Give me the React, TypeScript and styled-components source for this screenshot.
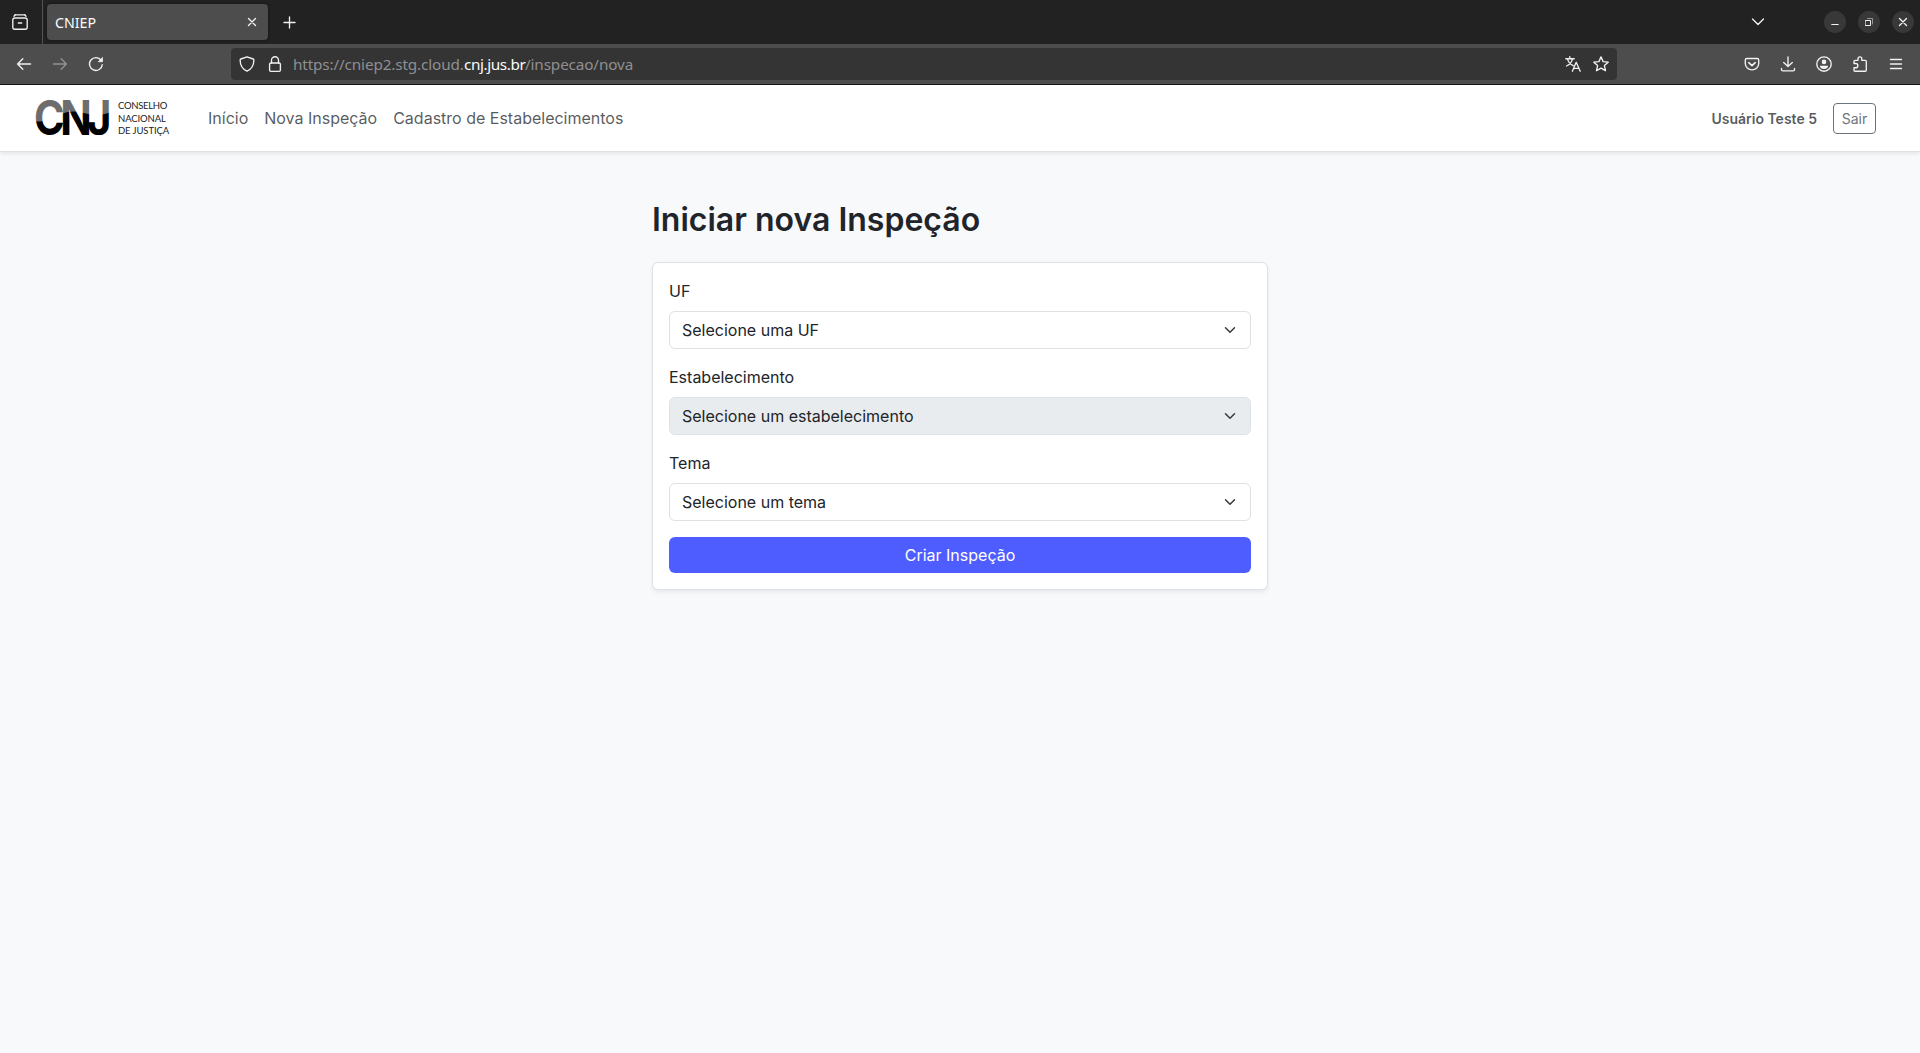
import React from "react";
import styled, { createGlobalStyle } from "styled-components";

const GlobalStyle = createGlobalStyle`
  *, *::before, *::after { box-sizing: border-box; }
  body {
    margin: 0;
    background: #f8f9fb;
    color: #212529;
    font-family: Inter, "Liberation Sans", sans-serif;
    font-size: 16px;
    line-height: 1.5;
  }
  button { font-family: inherit; margin: 0; }
`;

const Window = styled.div`
  display: flex;
  flex-direction: column;
  height: 1053px;
  overflow: hidden;
`;

/* ---------- browser chrome ---------- */

const TabStrip = styled.div`
  display: flex;
  align-items: center;
  flex: none;
  height: 44px;
  padding-right: 6px;
  background: #222222;
  font-family: "Noto Sans", "Open Sans", sans-serif;
`;

const RecentView = styled.div`
  display: flex;
  align-items: center;
  height: 44px;
  width: 43px;
  padding-left: 12px;
  border-right: 1px solid #535353;
`;

const Tab = styled.div`
  display: flex;
  align-items: center;
  justify-content: space-between;
  width: 221px;
  height: 36px;
  margin-left: 4px;
  padding: 2px 8px 0;
  border-radius: 4px;
  background: #4d4d4d;
  color: #fbfbfe;
  font-size: 14.2px;
  box-shadow: 0 0 3px rgba(0, 0, 0, 0.55);
`;

const NewTab = styled.div`
  display: flex;
  margin-left: 13px;
`;

const WindowControls = styled.div`
  display: flex;
  align-items: center;
  gap: 12px;
  margin-left: auto;
`;

const ListTabs = styled.div`
  display: flex;
  margin-right: 46px;
`;

const WindowButton = styled.div`
  display: flex;
  width: 22px;
  height: 22px;
  border-radius: 50%;
  background: #383838;
`;

const Toolbar = styled.div`
  display: flex;
  align-items: center;
  flex: none;
  height: 41px;
  padding: 0 16px 0 16px;
  border-bottom: 1px solid #141414;
  background: #4d4d4d;
`;

const ToolGroup = styled.div<{ $width?: number }>`
  display: flex;
  align-items: center;
  gap: 20px;
  width: ${(p) => (p.$width ? `${p.$width}px` : "auto")};
`;

const AddressBar = styled.div`
  display: flex;
  align-items: center;
  width: 1386px;
  height: 32px;
  padding: 0 8px;
  border-radius: 4px;
  background: #343434;
`;

const AddressIcons = styled.div`
  display: flex;
  gap: 12px;
`;

const Url = styled.div`
  flex: 1;
  margin-left: 10px;
  color: #8f8f92;
  font-family: "Noto Sans", "Open Sans", sans-serif;
  font-size: 15.3px;
  line-height: 30px;
  white-space: pre;
`;

const UrlPart = styled.span<{ $main?: boolean; $width: number }>`
  display: inline-flex;
  width: ${(p) => p.$width}px;
  color: ${(p) => (p.$main ? "#fbfbfe" : "inherit")};
  letter-spacing: ${(p) => (p.$main ? "-0.4px" : "-0.14px")};
`;

const RightTools = styled(ToolGroup)`
  margin-left: auto;
`;

const Glyph = styled.svg<{ $size?: number; $dim?: boolean }>`
  display: block;
  flex: none;
  width: ${(p) => p.$size ?? 16}px;
  height: ${(p) => p.$size ?? 16}px;
  fill: none;
  stroke: #fbfbfe;
  stroke-width: 1.35;
  stroke-linecap: round;
  stroke-linejoin: round;
  opacity: ${(p) => (p.$dim ? 0.4 : 0.95)};
`;

/* ---------- page ---------- */

const Navbar = styled.header`
  display: flex;
  align-items: center;
  position: relative;
  flex: none;
  height: 67px;
  padding: 0 44px 0 34px;
  border-bottom: 1px solid #dee2e6;
  background: #fff;
  box-shadow: 0 2px 4px rgba(0, 0, 0, 0.075);
`;

const Logo = styled.svg`
  display: block;
  flex: none;
  width: 136px;
  height: 64px;
`;

const NavLinks = styled.nav`
  display: flex;
  gap: 16px;
  margin-left: 38px;
`;

const NavLink = styled.a`
  color: rgba(33, 37, 41, 0.75);
  text-decoration: none;
`;

const Account = styled.div`
  display: flex;
  align-items: center;
  gap: 16px;
  margin-left: auto;
`;

const UserName = styled.span`
  color: rgba(33, 37, 41, 0.75);
  font-size: 14px;
  font-weight: 600;
`;

const LogoutButton = styled.button`
  width: 43px;
  height: 31px;
  padding: 4px 0;
  border: 1px solid #6c757d;
  border-radius: 4px;
  background: transparent;
  color: #6c757d;
  font-size: 14px;
  line-height: 21px;
`;

const Main = styled.main`
  width: 616px;
  margin: 49px auto 0;
`;

const Title = styled.h1`
  margin: 0 0 23px;
  font-size: 32px;
  font-weight: 600;
  line-height: 38px;
`;

const Card = styled.form`
  padding: 16px;
  border: 1px solid #dee2e6;
  border-radius: 6px;
  background: #fff;
  box-shadow: 0 2px 4px rgba(0, 0, 0, 0.075);
`;

const Field = styled.div`
  display: flex;
  flex-direction: column;
  gap: 8px;
  margin-bottom: 16px;
`;

const Label = styled.label`
  line-height: 24px;
`;

const Select = styled.div<{ $disabled?: boolean }>`
  display: flex;
  align-items: center;
  justify-content: space-between;
  height: 38px;
  padding: 0 12px;
  border: 1px solid #dee2e6;
  border-radius: 6px;
  background: ${(p) => (p.$disabled ? "#e9ecef" : "#fff")};
`;

const Caret = styled.svg`
  width: 16px;
  height: 12px;
  fill: none;
  stroke: #343a40;
  stroke-width: 2;
  stroke-linecap: round;
  stroke-linejoin: round;
`;

const SubmitButton = styled.button`
  display: block;
  width: 100%;
  height: 36px;
  padding: 0;
  border: 0;
  border-radius: 6px;
  background: #4e5dff;
  color: #fff;
  font-size: 16px;
  line-height: 24px;
`;

const fields = [
  { label: "UF", value: "Selecione uma UF" },
  { label: "Estabelecimento", value: "Selecione um estabelecimento", disabled: true },
  { label: "Tema", value: "Selecione um tema" },
];

const links = ["Início", "Nova Inspeção", "Cadastro de Estabelecimentos"];

function BrandLogo() {
  return (
    <Logo viewBox="0 0 136 64" role="img">
      <defs>
        <pattern id="twoTone" patternUnits="userSpaceOnUse" x="0" y="0" width="100" height="64">
          <rect width="100" height="64" fill="#6d6d6d" />
          <path d="M0 35 C12 37 22 33 32 28 C46 23 54 27 67 29 C76 30 84 28 100 22 V64 H0Z" fill="#000" />
        </pattern>
      </defs>
      <text
        transform="scale(0.87 1)"
        x="0"
        y="49.5"
        fill="url(#twoTone)"
        fontFamily="Inter"
        fontWeight="700"
        fontSize="47.5"
        letterSpacing="-5"
      >
        CNJ
      </text>
      <g fill="#222" fontFamily="Lato" fontSize="9.5">
        <text x="84" y="23.3" letterSpacing="-0.3">CONSELHO</text>
        <text x="84" y="36" letterSpacing="-0.1">NACIONAL</text>
        <text x="84" y="48.3" letterSpacing="-0.1">DE JUSTIÇA</text>
      </g>
    </Logo>
  );
}

export default function App() {
  return (
    <Window>
      <GlobalStyle />
      <TabStrip>
        <RecentView>
          <Glyph viewBox="0 0 16 16">
            <path d="M3 .9h10M6.3 9h3.4" />
            <rect x=".8" y="4" width="14.4" height="11.2" rx="2" />
            <path d="M2 2.3c.2-.9.6-1.4 1.5-1.4M14 2.3c-.2-.9-.6-1.4-1.5-1.4" />
          </Glyph>
        </RecentView>
        <Tab>
          CNIEP
          <Glyph viewBox="0 0 16 16">
            <path d="M4.5 3.5l7 7M11.5 3.5l-7 7" />
          </Glyph>
        </Tab>
        <NewTab>
          <Glyph viewBox="0 0 16 16">
            <path d="M8.5 3v11M3 8.5h11" />
          </Glyph>
        </NewTab>
        <WindowControls>
          <ListTabs>
            <Glyph viewBox="0 0 16 16">
              <path d="M2.5 5L8 10.5 13.5 5" />
            </Glyph>
          </ListTabs>
          <WindowButton>
            <Glyph $size={22} viewBox="0 0 22 22">
              <path d="M7.3 13.5h7.4" strokeLinecap="butt" strokeWidth="1" />
            </Glyph>
          </WindowButton>
          <WindowButton>
            <Glyph $size={22} viewBox="0 0 22 22">
              <path d="M7.5 9.5h5v5h-5z" strokeWidth="1" />
              <path d="M9.5 7.5h5v5.5" strokeWidth="1" opacity=".5" />
            </Glyph>
          </WindowButton>
          <WindowButton>
            <Glyph $size={22} viewBox="0 0 22 22">
              <path d="M7.5 7.5l7 7M14.5 7.5l-7 7" />
            </Glyph>
          </WindowButton>
        </WindowControls>
      </TabStrip>

      <Toolbar>
        <ToolGroup $width={215}>
          <Glyph viewBox="0 0 16 16">
            <path d="M6.8 2.8L1.6 8l5.2 5.2M1.6 8H14.6" />
          </Glyph>
          <Glyph viewBox="0 0 16 16" $dim>
            <path d="M9.2 2.8L14.4 8l-5.2 5.2M14.4 8H1.4" />
          </Glyph>
          <Glyph viewBox="0 0 16 16">
            <path d="M13.2 4.4A6.4 6.4 0 1 0 14.3 8.6" />
            <path d="M14.5 1.8v3.9h-3.9z" fill="#fbfbfe" strokeWidth=".8" />
          </Glyph>
        </ToolGroup>
        <AddressBar>
          <AddressIcons>
            <Glyph viewBox="0 0 16 16">
              <path d="M8 .8L14.2 3c.5.2.8.5.7 1-.1 5-2 9-6.9 11.2C3.1 13 1.2 9 1.1 4c0-.5.2-.8.7-1z" />
            </Glyph>
            <Glyph viewBox="0 0 16 16">
              <rect x="2.6" y="7" width="10.8" height="8.3" rx="1.3" />
              <path d="M4.5 7V4.2a3.5 3.5 0 0 1 7 0V7" />
            </Glyph>
          </AddressIcons>
          <Url>
            <UrlPart $width={171}>https://cniep2.stg.cloud.</UrlPart>
            <UrlPart $width={61} $main>cnj.jus.br</UrlPart>
            <UrlPart $width={107}>/inspecao/nova</UrlPart>
          </Url>
          <AddressIcons>
            <Glyph viewBox="0 0 16 16">
              <path d="M.8 2.7h8.4M4.8.7v2M2.5 2.9c.8 3 2.9 5.6 5.7 6.8M7.5 2.9C6.8 6 4.5 8.7 1.5 10" />
              <path d="M7.4 15.2L11.2 6.3 15.2 15.2M8.7 12.3h5.2" />
            </Glyph>
            <Glyph viewBox="0 0 16 16">
              <path d="M8 .9l2.1 4.7 5.1.6-3.8 3.4 1.1 5.1L8 12.2l-4.5 2.5 1.1-5.1L.8 6.2l5.1-.6z" />
            </Glyph>
          </AddressIcons>
        </AddressBar>
        <RightTools>
          <Glyph viewBox="0 0 16 16">
            <path d="M2.8 2.5h10.4c.9 0 1.5.6 1.5 1.5v3.6a6.7 6.3 0 0 1-13.4 0V4c0-.9.6-1.5 1.5-1.5z" />
            <path d="M4.8 6.7L8 9.6l3.2-2.9" strokeWidth="1.6" />
          </Glyph>
          <Glyph viewBox="0 0 16 16">
            <path d="M8 .8v9.7M3.7 6.4L8 10.6l4.3-4.2M1.5 12.3v1.2c0 .8.5 1.3 1.3 1.3h10.4c.8 0 1.3-.5 1.3-1.3v-1.2" />
          </Glyph>
          <Glyph viewBox="0 0 16 16">
            <circle cx="8" cy="8" r="7.2" />
            <circle cx="8" cy="5.9" r="2.3" fill="#fbfbfe" stroke="none" />
            <path d="M3.9 9.7h8.2c0 2-1.7 3.3-4.1 3.3s-4.1-1.3-4.1-3.3z" fill="#fbfbfe" stroke="none" />
          </Glyph>
          <Glyph viewBox="0 0 16 16">
            <path d="M2 7.5V5.3c0-.7.4-1 1-1h3V2.8a1.9 1.9 0 0 1 3.8 0v1.5h3.5c.7 0 1 .4 1 1v9c0 .6-.4.9-1 .9H3c-.7 0-1-.4-1-1v-2.4h1.7a2 2 0 0 0 0-4.3z" />
          </Glyph>
          <Glyph viewBox="0 0 16 16">
            <path d="M2.5 3.5h11M2.5 8h11M2.5 12.5h11" />
          </Glyph>
        </RightTools>
      </Toolbar>

      <Navbar>
        <BrandLogo />
        <NavLinks>
          {links.map((l) => (
            <NavLink key={l}>{l}</NavLink>
          ))}
        </NavLinks>
        <Account>
          <UserName>Usuário Teste 5</UserName>
          <LogoutButton type="button">Sair</LogoutButton>
        </Account>
      </Navbar>

      <Main>
        <Title>Iniciar nova Inspeção</Title>
        <Card>
          {fields.map((f) => (
            <Field key={f.label}>
              <Label>{f.label}</Label>
              <Select $disabled={f.disabled}>
                {f.value}
                <Caret viewBox="0 0 16 16">
                  <path d="M2 5l6 6 6-6" />
                </Caret>
              </Select>
            </Field>
          ))}
          <SubmitButton type="button">Criar Inspeção</SubmitButton>
        </Card>
      </Main>
    </Window>
  );
}
